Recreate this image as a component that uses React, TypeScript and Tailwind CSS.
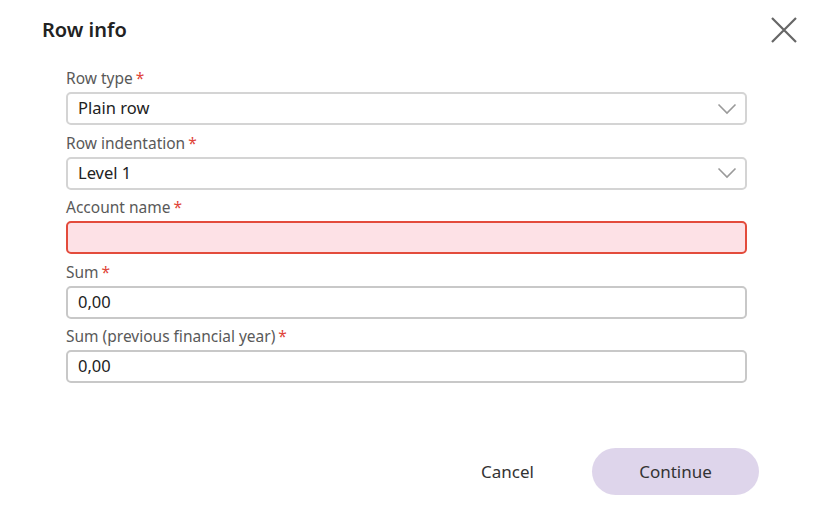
import React from 'react';

const font = { fontFamily: '"Noto Sans", "Open Sans", sans-serif' };

function Label({ text }: { text: string }) {
  return (
    <div className="h-[22px] leading-[22px] text-[15.5px] text-[#595959] mb-[3px]">
      {text}
      <span className="text-[#e0453a] ml-[3px]">*</span>
    </div>
  );
}

function Chevron() {
  return (
    <svg width="20" height="12" viewBox="0 0 20 12" fill="none" className="shrink-0">
      <path d="M1.5 1.5 L10 10 L18.5 1.5" stroke="#9a9a9a" strokeWidth="1.6" />
    </svg>
  );
}

function SelectField({ label, value }: { label: string; value: string }) {
  return (
    <div>
      <Label text={label} />
      <div className="h-[33px] flex items-center justify-between border-2 border-[#d4d4d4] rounded-[5px] pl-[10px] pr-[8px] text-[16.5px] text-[#222222]">
        <span>{value}</span>
        <Chevron />
      </div>
    </div>
  );
}

function TextField({ label, value, error }: { label: string; value?: string; error?: boolean }) {
  return (
    <div>
      <Label text={label} />
      <div
        className={
          error
            ? 'h-[33px] flex items-center border-2 border-[#e34b3c] bg-[#fde1e6] rounded-[5px] pl-[10px] text-[16.5px] text-[#222222]'
            : 'h-[33px] flex items-center border-2 border-[#c8c8c8] rounded-[5px] pl-[10px] text-[16.5px] text-[#222222]'
        }
      >
        {value}
      </div>
    </div>
  );
}

export default function App() {
  return (
    <div className="w-[813px] h-[527px] bg-white flex flex-col" style={font}>
      {/* Header */}
      <div className="flex items-center justify-between pl-[42px] pr-[14px] pt-[14px] h-[46px]">
        <h1 className="text-[20px] font-semibold text-[#222222]">Row info</h1>
        <button className="w-[30px] h-[30px] flex items-center justify-center">
          <svg width="28" height="28" viewBox="0 0 28 28" fill="none">
            <path d="M2 2 L26 26 M26 2 L2 26" stroke="#666666" strokeWidth="2.2" />
          </svg>
        </button>
      </div>

      {/* Form */}
      <div className="flex flex-col gap-[6.5px] pl-[66px] pr-[66px] pt-[21px]">
        <SelectField label="Row type" value="Plain row" />
        <SelectField label="Row indentation" value="Level 1" />
        <TextField label="Account name" error />
        <TextField label="Sum" value="0,00" />
        <TextField label="Sum (previous financial year)" value="0,00" />
      </div>

      {/* Footer */}
      <div className="flex items-center justify-end gap-[58px] pr-[54px] mt-[65px]">
        <button className="text-[17px] text-[#333333]">Cancel</button>
        <button className="w-[167px] h-[47px] rounded-full bg-[#ded5eb] text-[17px] text-[#333333]">
          Continue
        </button>
      </div>
    </div>
  );
}
